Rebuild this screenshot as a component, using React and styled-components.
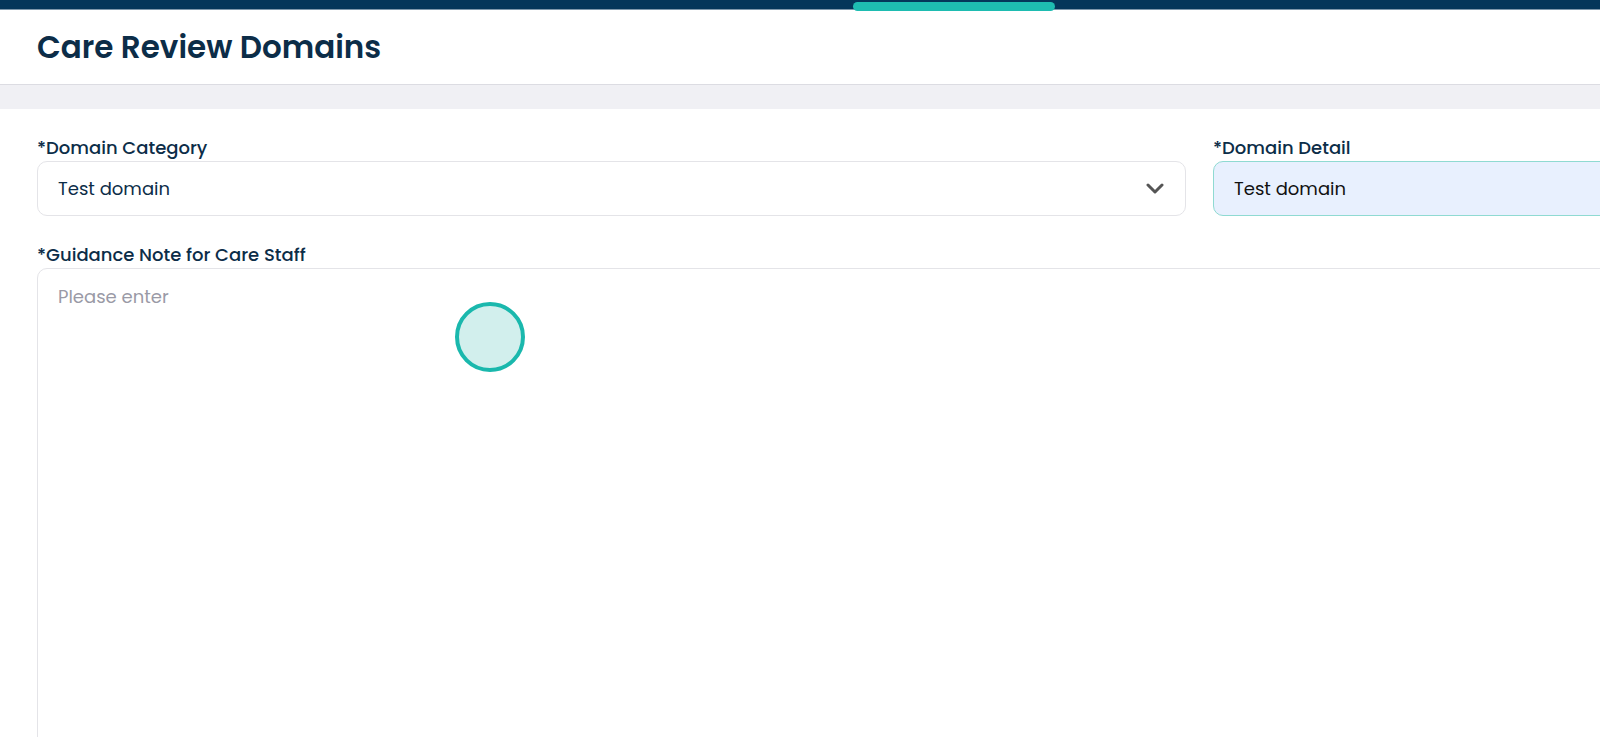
import styled, { createGlobalStyle } from 'styled-components'

const GlobalStyle = createGlobalStyle`
    html, body {
        margin: 0;
        padding: 0;
        background: #ffffff;
        overflow: hidden;
    }
    body {
        font-family: "Poppins", "Noto Sans", "Open Sans", sans-serif;
        color: #0c2d48;
    }
`

const Page = styled.div`
    width: 1600px;
    height: 737px;
    overflow: hidden;
    display: flex;
    flex-direction: column;
    & > * {
        flex-shrink: 0;
    }
`

const TopBar = styled.div`
    height: 10px;
    background: #04365a;
    border-bottom: 1px solid #7d97ab;
    box-sizing: border-box;
    display: flex;
    padding-left: 853px;
    padding-top: 2px;
`

const Progress = styled.div`
    width: 202px;
    height: 9px;
    border-radius: 5px;
    background: #1ebcb1;
`

const Header = styled.header`
    height: 75px;
    padding: 0 37px;
    display: flex;
    align-items: center;
    border-bottom: 1px solid #dcdce2;
    box-sizing: border-box;
`

const Title = styled.h1`
    margin: 0;
    font-size: 31px;
    font-weight: 600;
    color: #0c2d48;
`

const Band = styled.div`
    height: 24px;
    background: #f0f0f4;
`

const Form = styled.div`
    padding: 28px 0 0 37px;
    display: flex;
    flex-direction: column;
    gap: 28px;
`

const Row = styled.div`
    display: grid;
    grid-template-columns: 1149px 1149px;
    gap: 27px;
`

const Field = styled.div`
    display: flex;
    flex-direction: column;
    gap: 2px;
`

const Label = styled.label`
    font-size: 18px;
    font-weight: 500;
    line-height: 22px;
    color: #0c2d48;
`

const Box = styled.div`
    height: 55px;
    box-sizing: border-box;
    border: 1px solid ${p => (p.$active ? '#8fdad2' : '#e4e4e8')};
    background: ${p => (p.$active ? '#e8f0fe' : '#ffffff')};
    border-radius: 10px;
    padding: 0 20px;
    display: flex;
    align-items: center;
    justify-content: space-between;
    font-size: 18px;
    color: ${p => (p.$active ? '#111111' : '#0c2d48')};
`

const Chevron = styled.svg`
    width: 18px;
    height: 11px;
    margin-right: 1px;
`

const TextArea = styled.div`
    position: relative;
    height: 600px;
    width: 1700px;
    box-sizing: border-box;
    border: 1px solid #e4e4e8;
    border-radius: 10px;
    padding: 14px 20px;
    font-size: 18px;
    color: #9a9aa6;
`

const Touch = styled.div`
    position: absolute;
    left: 417px;
    top: 33px;
    width: 70px;
    height: 70px;
    box-sizing: border-box;
    border-radius: 50%;
    border: 4px solid #1ab8ad;
    background: #d2efed;
`

export default function App() {
    return (
        <>
            <GlobalStyle />
            <Page>
                <TopBar><Progress /></TopBar>
                <Header>
                    <Title>Care Review Domains</Title>
                </Header>
                <Band />
                <Form>
                    <Row>
                        <Field>
                            <Label>*Domain Category</Label>
                            <Box>
                                Test domain
                                <Chevron viewBox="0 0 18 11">
                                    <path d="M2 2 L9 9 L16 2" fill="none" stroke="#555555" strokeWidth="3" strokeLinecap="round" strokeLinejoin="round" />
                                </Chevron>
                            </Box>
                        </Field>
                        <Field>
                            <Label>*Domain Detail</Label>
                            <Box $active>Test domain</Box>
                        </Field>
                    </Row>
                    <Field>
                        <Label>*Guidance Note for Care Staff</Label>
                        <TextArea>
                            Please enter
                            <Touch />
                        </TextArea>
                    </Field>
                </Form>
            </Page>
        </>
    )
}
